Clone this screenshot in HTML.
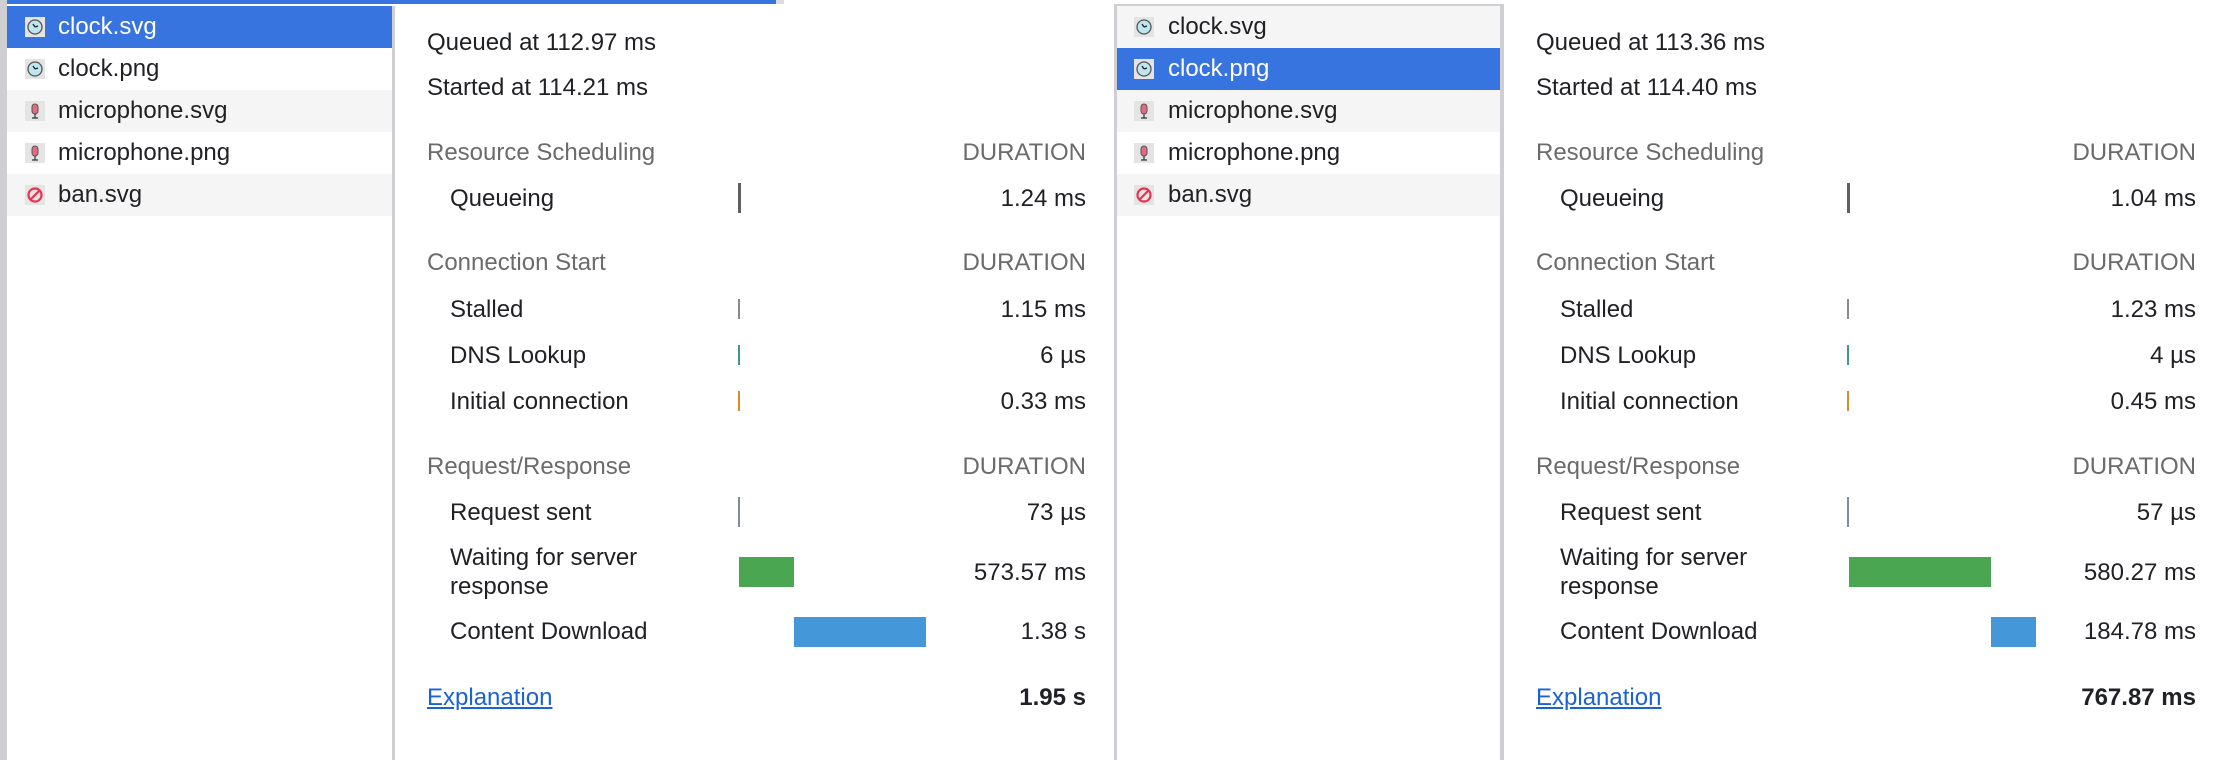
<!DOCTYPE html>
<html><head><meta charset="utf-8"><style>
body{margin:0;width:2228px;height:760px;background:#fff;position:relative;overflow:hidden;font-family:"Liberation Sans",Arial,sans-serif;font-size:24px;color:#202124}
.a{position:absolute}
.t{position:absolute;line-height:26px;white-space:nowrap}
.r{text-align:right}
.h{color:#6b6b6b}
.row{position:absolute;height:42px}
.ic{position:absolute;width:20px;height:20px;top:11px;background:#ddd}
.lbl{position:absolute;top:8px;line-height:26px}
.sel{background:#3874e0;color:#fff}
.z{background:#f5f5f5}
a{color:#1a62d6;text-decoration:underline}
</style></head><body>

<div class="a" style="left:0;top:0;width:7px;height:760px;background:#cfcfd3"></div>
<div class="a" style="left:7px;top:0;width:769px;height:4px;background:#3874e0"></div>
<div class="a" style="left:776px;top:0;width:8px;height:4px;background:#ddd"></div>
<div class="a" style="left:392px;top:6px;width:3px;height:754px;background:#cfcfd3"></div>

<div class="row sel" style="left:7px;top:6px;width:385px"><svg class="ic" style="left:18px" viewBox="0 0 20 20"><rect width="20" height="20" fill="#e4e4e4"/><circle cx="10" cy="10" r="7" fill="#bde6f0" stroke="#555" stroke-width="1.3"/><path d="M10 10l-2-3M10 10l3-1" stroke="#222" stroke-width="1.3"/></svg><span class="lbl" style="left:51px">clock.svg</span></div>
<div class="row" style="left:7px;top:48px;width:385px"><svg class="ic" style="left:18px" viewBox="0 0 20 20"><rect width="20" height="20" fill="#e4e4e4"/><circle cx="10" cy="10" r="7" fill="#bde6f0" stroke="#555" stroke-width="1.3"/><path d="M10 10l-2-3M10 10l3-1" stroke="#222" stroke-width="1.3"/></svg><span class="lbl" style="left:51px">clock.png</span></div>
<div class="row z" style="left:7px;top:90px;width:385px"><svg class="ic" style="left:18px" viewBox="0 0 20 20"><rect width="20" height="20" fill="#e4e4e4"/><rect x="7" y="3" width="6" height="10" rx="3" fill="#e46a80" stroke="#555"/><path d="M10 13v4M7 17h6" stroke="#333" stroke-width="1.2"/></svg><span class="lbl" style="left:51px">microphone.svg</span></div>
<div class="row" style="left:7px;top:132px;width:385px"><svg class="ic" style="left:18px" viewBox="0 0 20 20"><rect width="20" height="20" fill="#e4e4e4"/><rect x="7" y="3" width="6" height="10" rx="3" fill="#e46a80" stroke="#555"/><path d="M10 13v4M7 17h6" stroke="#333" stroke-width="1.2"/></svg><span class="lbl" style="left:51px">microphone.png</span></div>
<div class="row z" style="left:7px;top:174px;width:385px"><svg class="ic" style="left:18px" viewBox="0 0 20 20"><rect width="20" height="20" fill="#e4e4e4"/><circle cx="10" cy="10" r="6.5" fill="none" stroke="#e8344e" stroke-width="2.2"/><path d="M5.5 14.5l9-9" stroke="#e8344e" stroke-width="2.2"/></svg><span class="lbl" style="left:51px">ban.svg</span></div>

<div class="t" style="left:427px;top:30px">Queued at 112.97 ms</div>
<div class="t" style="left:427px;top:75px">Started at 114.21 ms</div>
<div class="t h" style="left:427px;top:140px">Resource Scheduling</div><div class="t h r" style="right:1142px;top:140px">DURATION</div>
<div class="t" style="left:450px;top:186px">Queueing</div><div class="t r" style="right:1142px;top:186px">1.24 ms</div>
<div class="a" style="left:738px;top:183px;width:3px;height:30px;background:#5f5f5f"></div>
<div class="t h" style="left:427px;top:250px">Connection Start</div><div class="t h r" style="right:1142px;top:250px">DURATION</div>
<div class="t" style="left:450px;top:297px">Stalled</div><div class="t r" style="right:1142px;top:297px">1.15 ms</div>
<div class="a" style="left:738px;top:299px;width:2px;height:20px;background:#8a8a8a"></div>
<div class="t" style="left:450px;top:343px">DNS Lookup</div><div class="t r" style="right:1142px;top:343px">6 µs</div>
<div class="a" style="left:738px;top:345px;width:2px;height:20px;background:#3d9a8a"></div>
<div class="t" style="left:450px;top:389px">Initial connection</div><div class="t r" style="right:1142px;top:389px">0.33 ms</div>
<div class="a" style="left:738px;top:391px;width:2px;height:20px;background:#d88a2c"></div>
<div class="t h" style="left:427px;top:454px">Request/Response</div><div class="t h r" style="right:1142px;top:454px">DURATION</div>
<div class="t" style="left:450px;top:500px">Request sent</div><div class="t r" style="right:1142px;top:500px">73 µs</div>
<div class="a" style="left:738px;top:497px;width:2px;height:30px;background:#7f8d9a"></div>
<div class="t" style="left:450px;top:545px">Waiting for server</div><div class="t" style="left:450px;top:574px">response</div><div class="t r" style="right:1142px;top:560px">573.57 ms</div>
<div class="a" style="left:739px;top:557px;width:55px;height:30px;background:#4ba651"></div>
<div class="t" style="left:450px;top:619px">Content Download</div><div class="t r" style="right:1142px;top:619px">1.38 s</div>
<div class="a" style="left:794px;top:617px;width:132px;height:30px;background:#4497d8"></div>
<div class="t" style="left:427px;top:685px"><a>Explanation</a></div><div class="t r" style="right:1142px;top:685px;font-weight:bold">1.95 s</div>

<div class="a" style="left:1114px;top:4px;width:3px;height:756px;background:#cfcfd3"></div>
<div class="a" style="left:1114px;top:4px;width:390px;height:2px;background:#cfcfd3"></div>
<div class="a" style="left:1500px;top:4px;width:4px;height:756px;background:#cfcfd3"></div>

<div class="row z" style="left:1117px;top:6px;width:383px"><svg class="ic" style="left:17px" viewBox="0 0 20 20"><rect width="20" height="20" fill="#e4e4e4"/><circle cx="10" cy="10" r="7" fill="#bde6f0" stroke="#555" stroke-width="1.3"/><path d="M10 10l-2-3M10 10l3-1" stroke="#222" stroke-width="1.3"/></svg><span class="lbl" style="left:51px">clock.svg</span></div>
<div class="row sel" style="left:1117px;top:48px;width:383px"><svg class="ic" style="left:17px" viewBox="0 0 20 20"><rect width="20" height="20" fill="#e4e4e4"/><circle cx="10" cy="10" r="7" fill="#bde6f0" stroke="#555" stroke-width="1.3"/><path d="M10 10l-2-3M10 10l3-1" stroke="#222" stroke-width="1.3"/></svg><span class="lbl" style="left:51px">clock.png</span></div>
<div class="row z" style="left:1117px;top:90px;width:383px"><svg class="ic" style="left:17px" viewBox="0 0 20 20"><rect width="20" height="20" fill="#e4e4e4"/><rect x="7" y="3" width="6" height="10" rx="3" fill="#e46a80" stroke="#555"/><path d="M10 13v4M7 17h6" stroke="#333" stroke-width="1.2"/></svg><span class="lbl" style="left:51px">microphone.svg</span></div>
<div class="row" style="left:1117px;top:132px;width:383px"><svg class="ic" style="left:17px" viewBox="0 0 20 20"><rect width="20" height="20" fill="#e4e4e4"/><rect x="7" y="3" width="6" height="10" rx="3" fill="#e46a80" stroke="#555"/><path d="M10 13v4M7 17h6" stroke="#333" stroke-width="1.2"/></svg><span class="lbl" style="left:51px">microphone.png</span></div>
<div class="row z" style="left:1117px;top:174px;width:383px"><svg class="ic" style="left:17px" viewBox="0 0 20 20"><rect width="20" height="20" fill="#e4e4e4"/><circle cx="10" cy="10" r="6.5" fill="none" stroke="#e8344e" stroke-width="2.2"/><path d="M5.5 14.5l9-9" stroke="#e8344e" stroke-width="2.2"/></svg><span class="lbl" style="left:51px">ban.svg</span></div>

<div class="t" style="left:1536px;top:30px">Queued at 113.36 ms</div>
<div class="t" style="left:1536px;top:75px">Started at 114.40 ms</div>
<div class="t h" style="left:1536px;top:140px">Resource Scheduling</div><div class="t h r" style="right:32px;top:140px">DURATION</div>
<div class="t" style="left:1560px;top:186px">Queueing</div><div class="t r" style="right:32px;top:186px">1.04 ms</div>
<div class="a" style="left:1847px;top:183px;width:3px;height:30px;background:#5f5f5f"></div>
<div class="t h" style="left:1536px;top:250px">Connection Start</div><div class="t h r" style="right:32px;top:250px">DURATION</div>
<div class="t" style="left:1560px;top:297px">Stalled</div><div class="t r" style="right:32px;top:297px">1.23 ms</div>
<div class="a" style="left:1847px;top:299px;width:2px;height:20px;background:#8a8a8a"></div>
<div class="t" style="left:1560px;top:343px">DNS Lookup</div><div class="t r" style="right:32px;top:343px">4 µs</div>
<div class="a" style="left:1847px;top:345px;width:2px;height:20px;background:#3d9a8a"></div>
<div class="t" style="left:1560px;top:389px">Initial connection</div><div class="t r" style="right:32px;top:389px">0.45 ms</div>
<div class="a" style="left:1847px;top:391px;width:2px;height:20px;background:#d88a2c"></div>
<div class="t h" style="left:1536px;top:454px">Request/Response</div><div class="t h r" style="right:32px;top:454px">DURATION</div>
<div class="t" style="left:1560px;top:500px">Request sent</div><div class="t r" style="right:32px;top:500px">57 µs</div>
<div class="a" style="left:1847px;top:497px;width:2px;height:30px;background:#7f8d9a"></div>
<div class="t" style="left:1560px;top:545px">Waiting for server</div><div class="t" style="left:1560px;top:574px">response</div><div class="t r" style="right:32px;top:560px">580.27 ms</div>
<div class="a" style="left:1849px;top:557px;width:142px;height:30px;background:#4ba651"></div>
<div class="t" style="left:1560px;top:619px">Content Download</div><div class="t r" style="right:32px;top:619px">184.78 ms</div>
<div class="a" style="left:1991px;top:617px;width:45px;height:30px;background:#4497d8"></div>
<div class="t" style="left:1536px;top:685px"><a>Explanation</a></div><div class="t r" style="right:32px;top:685px;font-weight:bold">767.87 ms</div>
</body></html>
